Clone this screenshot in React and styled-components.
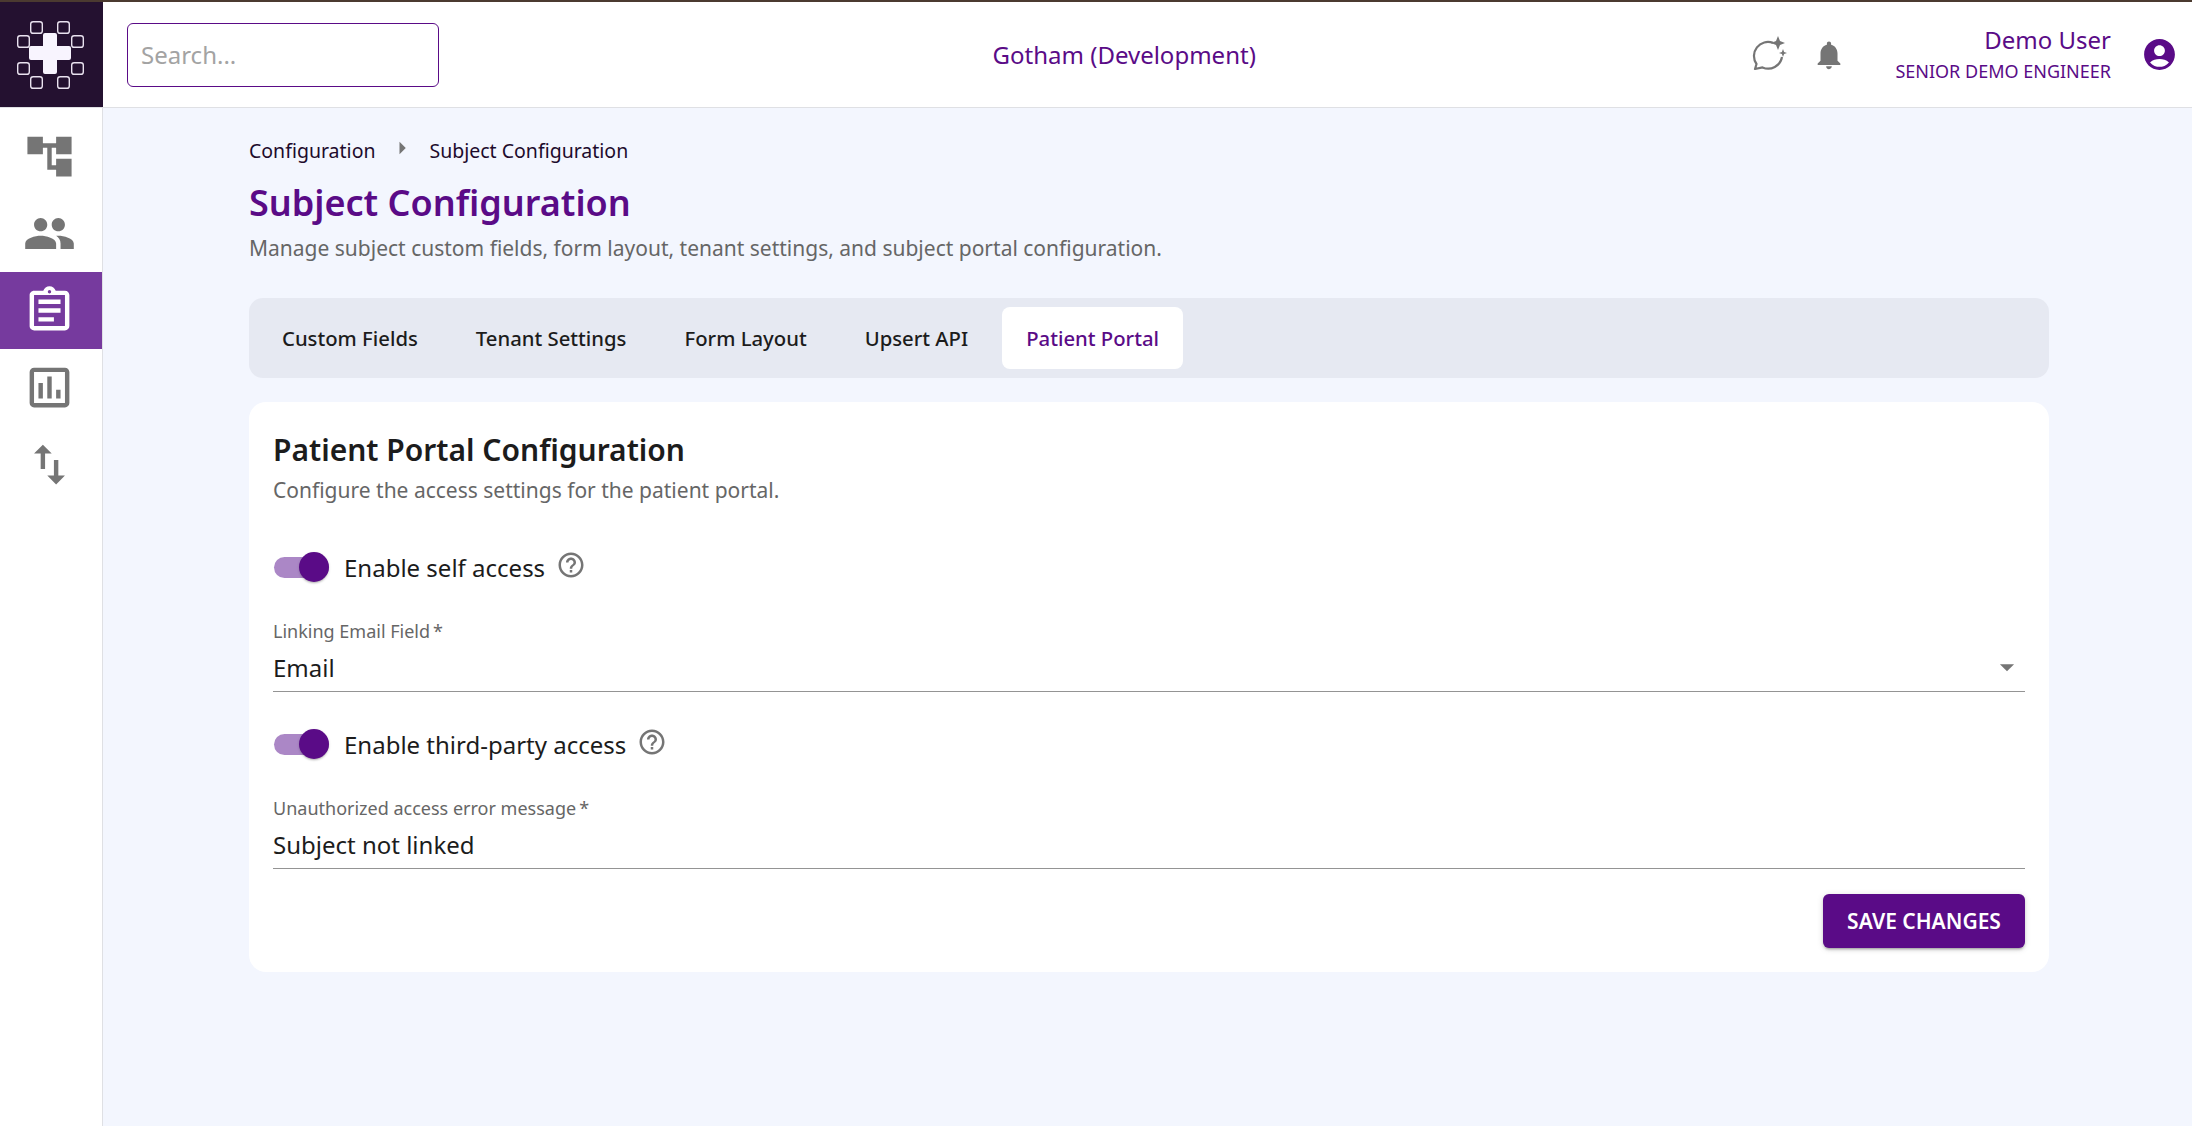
import React from 'react';
import styled, { createGlobalStyle } from 'styled-components';
import {
  MdAccountTree,
  MdPeople,
  MdOutlineAssignment,
  MdOutlineAssessment,
  MdSwapVert,
  MdNotifications,
  MdAccountCircle,
  MdHelpOutline,
  MdArrowDropDown,
  MdArrowRight,
} from 'react-icons/md';

const purple = '#5a0b87';
const grey = '#757575';

const GlobalStyle = createGlobalStyle`
  html, body {
    margin: 0;
    padding: 0;
    background: #f3f6fe;
  }
  * {
    box-sizing: border-box;
  }
  body {
    font-family: "Noto Sans", "Open Sans", sans-serif;
    color: #1c1c1c;
  }
`;

const Shell = styled.div`
  height: 100vh;
  display: flex;
  flex-direction: column;
  overflow: hidden;
`;

const Header = styled.header`
  height: 108px;
  flex: none;
  display: flex;
  align-items: stretch;
  background: #fff;
  border-top: 2px solid #4b3a30;
  border-bottom: 1px solid #dfe0e4;
`;

const LogoBox = styled.div`
  width: 103px;
  flex: none;
  display: flex;
  align-items: center;
  justify-content: center;
  background: #241130;
`;

const SearchWrap = styled.div`
  margin-left: 24px;
  display: flex;
  align-items: center;
`;

const SearchInput = styled.input`
  width: 312px;
  height: 64px;
  padding: 0 13px;
  border: 1px solid ${purple};
  border-radius: 6px;
  background: #fff;
  font-family: inherit;
  font-size: 24px;
  outline: none;
  &::placeholder {
    color: #a3a3a3;
    opacity: 1;
  }
`;

const TenantName = styled.div`
  flex: 1;
  padding-left: 58px;
  display: flex;
  align-items: center;
  justify-content: center;
  font-size: 24px;
  color: ${purple};
`;

const HeaderActions = styled.div`
  display: flex;
  align-items: center;
  padding-right: 14px;
`;

const ActionIcon = styled.div`
  width: ${(props) => props.size}px;
  height: ${(props) => props.size}px;
  margin-right: ${(props) => props.gap}px;
  display: flex;
  align-items: center;
  justify-content: center;
  color: ${(props) => props.color || grey};
  font-size: ${(props) => props.size}px;
`;

const UserBlock = styled.div`
  display: flex;
  flex-direction: column;
  align-items: flex-end;
  margin-right: 30px;
  color: ${purple};
`;

const UserName = styled.div`
  font-size: 24px;
  line-height: 32px;
  margin-top: -1px;
`;

const UserRole = styled.div`
  margin-top: 2px;
  font-size: 18px;
  line-height: 27px;
  text-transform: uppercase;
`;

const Body = styled.div`
  flex: 1;
  display: flex;
  min-height: 0;
`;

const Sidebar = styled.nav`
  width: 103px;
  flex: none;
  padding-top: 10px;
  background: #fff;
  border-right: 1.4px solid #dfe0e4;
`;

const NavItem = styled.div`
  height: 77px;
  padding-right: 3px;
  display: flex;
  align-items: center;
  justify-content: center;
  font-size: 53px;
  color: ${(props) => (props.active ? '#fff' : grey)};
  background: ${(props) => (props.active ? '#763a9e' : 'transparent')};
`;

const Main = styled.main`
  flex: 1;
  min-width: 0;
  padding: 28px 143px 0 146px;
`;

const Breadcrumb = styled.div`
  height: 28px;
  display: flex;
  align-items: center;
  font-size: 19.5px;
  color: #1d0b2c;
`;

const CrumbArrow = styled.span`
  width: 50px;
  margin: -4px 0 0 4px;
  display: flex;
  justify-content: center;
  padding-right: 4px;
  font-size: 30px;
  color: ${grey};
`;

const PageTitle = styled.h1`
  margin: 15px 0 0;
  font-size: 36px;
  line-height: 48px;
  font-weight: 600;
  color: ${purple};
`;

const PageSubtitle = styled.p`
  margin: 6px 0 0;
  font-size: 21px;
  line-height: 30px;
  color: #666;
`;

const TabBar = styled.div`
  margin-top: 35px;
  height: 80px;
  display: flex;
  align-items: center;
  gap: 10px;
  padding: 0 9px;
  background: #e6e9f2;
  border-radius: 14px;
`;

const Tab = styled.div`
  height: 62px;
  padding: 0 24px;
  display: flex;
  align-items: center;
  border-radius: 8px;
  font-size: 20.3px;
  font-weight: 500;
  color: ${(props) => (props.active ? purple : '#1c1c1c')};
  background: ${(props) => (props.active ? '#fff' : 'transparent')};
`;

const Card = styled.section`
  margin-top: 24px;
  height: 570px;
  padding: 28px 24px 0;
  background: #fff;
  border-radius: 17px;
`;

const CardTitle = styled.h2`
  margin: 0;
  font-size: 30px;
  line-height: 40px;
  font-weight: 600;
  color: #1c1c1c;
`;

const CardSubtitle = styled.p`
  margin: 6px 0 0;
  font-size: 21px;
  line-height: 28px;
  color: #666;
`;

const ToggleRow = styled.div`
  margin-top: ${(props) => props.top}px;
  height: 36px;
  display: flex;
  align-items: center;
`;

const SwitchTrack = styled.div`
  position: relative;
  width: 55px;
  height: 21px;
  margin-left: 1px;
  background: #ab87c6;
  border-radius: 11px;
`;

const SwitchThumb = styled.div`
  position: absolute;
  top: -5px;
  right: 0;
  width: 30px;
  height: 30px;
  background: ${purple};
  border-radius: 50%;
  box-shadow: 0 2px 2px -1px rgba(0, 0, 0, 0.2), 0 1px 3px rgba(0, 0, 0, 0.14);
`;

const ToggleLabel = styled.span`
  margin-left: 15px;
  font-size: 24px;
  color: #1c1c1c;
`;

const HelpIcon = styled.span`
  margin: -5px 0 0 11px;
  display: flex;
  font-size: 30px;
  color: ${grey};
`;

const Field = styled.div`
  margin-top: ${(props) => props.top}px;
  border-bottom: 1.4px solid #949494;
`;

const FieldLabel = styled.div`
  font-size: 18px;
  line-height: 24px;
  color: #666;
`;

const FieldValue = styled.div`
  height: 48px;
  display: flex;
  align-items: center;
  justify-content: space-between;
  font-size: 24px;
  color: #1c1c1c;
`;

const SelectCaret = styled.span`
  display: flex;
  margin-right: 1px;
  font-size: 34px;
  color: ${grey};
`;

const CardFooter = styled.div`
  margin-top: 25px;
  display: flex;
  justify-content: flex-end;
`;

const SaveButton = styled.button`
  width: 202px;
  height: 54px;
  border: none;
  border-radius: 6px;
  background: ${purple};
  color: #fff;
  font-family: inherit;
  font-size: 21px;
  font-weight: 600;
  text-transform: uppercase;
  box-shadow: 0 3px 2px -2px rgba(0, 0, 0, 0.2), 0 2px 3px rgba(0, 0, 0, 0.14), 0 1px 7px rgba(0, 0, 0, 0.12);
`;

// small outlined squares around the cross
const logoDots = [
  [30, 19], [57, 19], [17, 33], [71, 33], [17, 60], [71, 60], [30, 74], [57, 74],
];

const Logo = () => (
  <svg width="103" height="105" viewBox="0 0 103 105" fill="none">
    {logoDots.map(([x, y]) => (
      <rect key={`${x}-${y}`} x={x + 0.7} y={y + 0.7} width="11.6" height="11.6" rx="2.4" stroke="#e9e2ef" strokeWidth="1.4" />
    ))}
    <path
      d="M45 31h10a2 2 0 0 1 2 2v11h12a2 2 0 0 1 2 2v10a2 2 0 0 1-2 2H57v12a2 2 0 0 1-2 2H45a2 2 0 0 1-2-2V58H31a2 2 0 0 1-2-2V46a2 2 0 0 1 2-2h12V33a2 2 0 0 1 2-2z"
      fill="#f8f4fe"
    />
  </svg>
);

const ChatSparkIcon = () => (
  <svg width="38" height="38" viewBox="0 0 38 38" fill="none">
    <path
      d="M22 6.9A14 14 0 0 0 5.5 28L4 33l7.5-1.6A14 14 0 0 0 31 21"
      stroke={grey}
      strokeWidth="2.2"
      strokeLinejoin="round"
    />
    <path d="M27 0l2 5 5 2-5 2-2 5-2-5-5-2 5-2z" fill={grey} />
    <path d="M32 13l1.1 2.9 2.9 1.1-2.9 1.1-1.1 2.9-1.1-2.9-2.9-1.1 2.9-1.1z" fill={grey} />
  </svg>
);

const navItems = [
  { icon: <MdAccountTree /> },
  { icon: <MdPeople /> },
  { icon: <MdOutlineAssignment />, active: true },
  { icon: <MdOutlineAssessment /> },
  { icon: <MdSwapVert /> },
];

const tabs = ['Custom Fields', 'Tenant Settings', 'Form Layout', 'Upsert API', 'Patient Portal'];

const App = () => {
  return (
    <Shell>
      <GlobalStyle />
      <Header>
        <LogoBox>
          <Logo />
        </LogoBox>
        <SearchWrap>
          <SearchInput placeholder="Search..." />
        </SearchWrap>
        <TenantName>Gotham (Development)</TenantName>
        <HeaderActions>
          <ActionIcon size={38} gap={23}>
            <ChatSparkIcon />
          </ActionIcon>
          <ActionIcon size={34} gap={49}>
            <MdNotifications />
          </ActionIcon>
          <UserBlock>
            <UserName>Demo User</UserName>
            <UserRole>Senior Demo Engineer</UserRole>
          </UserBlock>
          <ActionIcon size={37} gap={0} color={purple}>
            <MdAccountCircle />
          </ActionIcon>
        </HeaderActions>
      </Header>
      <Body>
        <Sidebar>
          {navItems.map((item, i) => (
            <NavItem key={i} active={item.active}>
              {item.icon}
            </NavItem>
          ))}
        </Sidebar>
        <Main>
          <Breadcrumb>
            <span>Configuration</span>
            <CrumbArrow>
              <MdArrowRight />
            </CrumbArrow>
            <span>Subject Configuration</span>
          </Breadcrumb>
          <PageTitle>Subject Configuration</PageTitle>
          <PageSubtitle>Manage subject custom fields, form layout, tenant settings, and subject portal configuration.</PageSubtitle>
          <TabBar>
            {tabs.map((tab) => (
              <Tab key={tab} active={tab === 'Patient Portal'}>
                {tab}
              </Tab>
            ))}
          </TabBar>
          <Card>
            <CardTitle>Patient Portal Configuration</CardTitle>
            <CardSubtitle>Configure the access settings for the patient portal.</CardSubtitle>
            <ToggleRow top={45}>
              <SwitchTrack>
                <SwitchThumb />
              </SwitchTrack>
              <ToggleLabel>Enable self access</ToggleLabel>
              <HelpIcon>
                <MdHelpOutline />
              </HelpIcon>
            </ToggleRow>
            <Field top={34}>
              <FieldLabel>Linking Email Field{'\u2009'}*</FieldLabel>
              <FieldValue>
                Email
                <SelectCaret>
                  <MdArrowDropDown />
                </SelectCaret>
              </FieldValue>
            </Field>
            <ToggleRow top={34}>
              <SwitchTrack>
                <SwitchThumb />
              </SwitchTrack>
              <ToggleLabel>Enable third-party access</ToggleLabel>
              <HelpIcon>
                <MdHelpOutline />
              </HelpIcon>
            </ToggleRow>
            <Field top={34}>
              <FieldLabel>Unauthorized access error message{'\u2009'}*</FieldLabel>
              <FieldValue>Subject not linked</FieldValue>
            </Field>
            <CardFooter>
              <SaveButton>Save Changes</SaveButton>
            </CardFooter>
          </Card>
        </Main>
      </Body>
    </Shell>
  );
};

export default App;
